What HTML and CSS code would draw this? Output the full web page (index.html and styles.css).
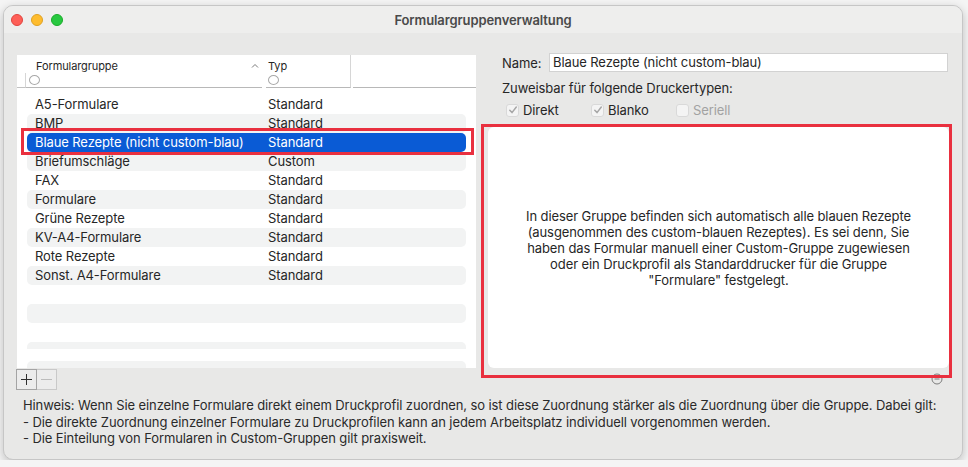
FILE: index.html
```html
<!DOCTYPE html>
<html lang="de">
<head>
	<meta charset="UTF-8">
	<title>Formulargruppenverwaltung</title>
	<link rel="stylesheet" href="styles.css">
</head>
<body>
	<div class="window">
		<div class="titlebar">
			<div class="lights">
				<span class="light red"></span>
				<span class="light yellow"></span>
				<span class="light green"></span>
			</div>
			<div class="title">Formulargruppenverwaltung</div>
			<div class="lights-spacer"></div>
		</div>

		<div class="main">
			<div class="left">
				<div class="table">
					<div class="head">
						<div class="hstub"></div>
						<div class="hcol hcol-name">
							<div class="hlabel">Formulargruppe
								<svg class="caret" width="8" height="5" viewBox="0 0 8 5"><path d="M1 4.5 L4 1.5 L7 4.5" fill="none" stroke="#7a7a7a" stroke-width="1"/></svg>
							</div>
							<span class="hradio"></span>
						</div>
						<div class="hcol hcol-type">
							<div class="hlabel">Typ</div>
							<span class="hradio"></span>
						</div>
						<div class="hcol hcol-rest"></div>
					</div>
					<div class="rows">
						<div class="row"><span class="c1">A5-Formulare</span><span class="c2">Standard</span></div>
						<div class="row alt"><span class="c1">BMP</span><span class="c2">Standard</span></div>
						<div class="row selected"><span class="c1">Blaue Rezepte (nicht custom-blau)</span><span class="c2">Standard</span></div>
						<div class="row alt"><span class="c1">Briefumschläge</span><span class="c2">Custom</span></div>
						<div class="row"><span class="c1">FAX</span><span class="c2">Standard</span></div>
						<div class="row alt"><span class="c1">Formulare</span><span class="c2">Standard</span></div>
						<div class="row"><span class="c1">Grüne Rezepte</span><span class="c2">Standard</span></div>
						<div class="row alt"><span class="c1">KV-A4-Formulare</span><span class="c2">Standard</span></div>
						<div class="row"><span class="c1">Rote Rezepte</span><span class="c2">Standard</span></div>
						<div class="row alt"><span class="c1">Sonst. A4-Formulare</span><span class="c2">Standard</span></div>
						<div class="row"></div>
						<div class="row alt"></div>
						<div class="row"></div>
						<div class="row alt cut"></div>
						<div class="gap"></div>
						<div class="row alt"></div>
					</div>
				</div>
				<div class="btns">
					<span class="btn"><svg width="11" height="11" viewBox="0 0 11 11"><path d="M5.5 0 V11 M0 5.5 H11" stroke="#2e2e2e" stroke-width="1"/></svg></span>
					<span class="btn disabled"><svg width="11" height="11" viewBox="0 0 11 11"><path d="M0 5.5 H11" stroke="#bcbcbc" stroke-width="1"/></svg></span>
				</div>
			</div>

			<div class="right">
				<div class="namerow">
					<label class="namelabel">Name:</label>
					<div class="nameinput">Blaue Rezepte (nicht custom-blau)</div>
				</div>
				<div class="caption">Zuweisbar für folgende Druckertypen:</div>
				<div class="checks">
					<div class="check"><span class="box"><svg width="10" height="10" viewBox="0 0 10 10"><path d="M1.8 5.2 L4 7.6 L8.3 2" fill="none" stroke="#a6a6a6" stroke-width="1.5" stroke-linecap="round" stroke-linejoin="round"/></svg></span>Direkt</div>
					<div class="check"><span class="box"><svg width="10" height="10" viewBox="0 0 10 10"><path d="M1.8 5.2 L4 7.6 L8.3 2" fill="none" stroke="#a6a6a6" stroke-width="1.5" stroke-linecap="round" stroke-linejoin="round"/></svg></span>Blanko</div>
					<div class="check off"><span class="box"></span>Seriell</div>
				</div>
				<div class="infobox">
					<p>In dieser Gruppe befinden sich automatisch alle blauen Rezepte<br>
					(ausgenommen des custom-blauen Rezeptes). Es sei denn, Sie<br>
					haben das Formular manuell einer Custom-Gruppe zugewiesen<br>
					oder ein Druckprofil als Standarddrucker für die Gruppe<br>
					"Formulare" festgelegt.</p>
				</div>
				<div class="grip">
					<svg width="12" height="12" viewBox="0 0 12 12"><circle cx="6" cy="6" r="5" fill="none" stroke="#7c7c7c" stroke-width="1"/><path d="M3.5 6 H8.5" stroke="#7c7c7c" stroke-width="1"/></svg>
				</div>
			</div>
		</div>

		<div class="hint">
			Hinweis: Wenn Sie einzelne Formulare direkt einem Druckprofil zuordnen, so ist diese Zuordnung stärker als die Zuordnung über die Gruppe. Dabei gilt:<br>
			- Die direkte Zuordnung einzelner Formulare zu Druckprofilen kann an jedem Arbeitsplatz individuell vorgenommen werden.<br>
			- Die Einteilung von Formularen in Custom-Gruppen gilt praxisweit.
		</div>

		<div class="mark mark-row"></div>
		<div class="mark mark-box"></div>
	</div>
</body>
</html>
```

FILE: styles.css
```css
* {
	box-sizing: border-box;
}
body {
	margin: 0;
	background: #f4f4f4;
	font-family: Inter, "Liberation Sans", Arial, sans-serif;
	font-size: 13px;
	letter-spacing: -0.1px;
	color: #262626;
}
.window {
	position: relative;
	margin: 5px 0 0 3px;
	width: 960px;
	height: 455px;
	border: 1px solid #c6c6c6;
	border-radius: 10px;
	background: #e8e8e7;
	overflow: hidden;
	box-shadow: 0 3px 10px rgba(0, 0, 0, 0.22);
}

/* title bar */
.titlebar {
	height: 27px;
	display: flex;
	align-items: center;
	background: #eeeeed;
}
.lights, .lights-spacer {
	width: 100px;
	display: flex;
	gap: 8px;
	padding-left: 7px;
}
.light {
	width: 12px;
	height: 12px;
	border-radius: 50%;
}
.red { background: #fe5f57; border: 0.5px solid #e0443e; }
.yellow { background: #febc2e; border: 0.5px solid #dea123; }
.green { background: #28c840; border: 0.5px solid #1aab29; }
.title {
	flex: 1;
	text-align: center;
	font-weight: 600;
	color: #4a4a4a;
}

/* main area */
.main {
	display: flex;
	align-items: flex-start;
	height: 357px;
	padding: 22px 0 0 13px;
}
.left {
	width: 459px;
}
.table {
	height: 313px;
	background: #fff;
	overflow: hidden;
}
.head {
	display: flex;
	align-items: flex-end;
	height: 33px;
}
.hstub {
	width: 9px;
	height: 15px;
	border-bottom: 1px solid #c2c2c2;
	border-right: 1px solid #d6d6d6;
}
.hcol {
	height: 33px;
	border-bottom: 1px solid #b8b8b8;
	padding-top: 4px;
}
.hcol-name {
	width: 236px;
	margin-right: 4px;
	padding-left: 3px;
}
.hcol-name .hlabel {
	padding-left: 7px;
}
.hcol-type {
	width: 85px;
	margin-right: 2px;
	padding-left: 2px;
	border-right: 1px solid #d6d6d6;
}
.hcol-rest {
	flex: 1;
	height: 23px;
}
.hlabel {
	display: flex;
	justify-content: space-between;
	align-items: center;
	font-size: 11px;
	line-height: 14px;
	color: #262626;
	padding-right: 3px;
}
.caret {
	margin-top: -2px;
}
.hradio {
	display: block;
	width: 11px;
	height: 10px;
	margin-top: 2px;
	border: 1px solid #a9a9a9;
	border-radius: 50%;
}
.rows {
	padding: 7px 10px 0 10px;
}
.row {
	display: flex;
	height: 19px;
	line-height: 19px;
	border-radius: 5px;
}
.row.alt {
	background: #f2f3f3;
}
.row.selected {
	background: #0a5bd5;
	color: #fff;
}
.row.cut {
	height: 7px;
	border-radius: 5px 5px 0 0;
}
.gap {
	height: 12px;
}
.c1 {
	width: 241px;
	padding-left: 8px;
}
.btns {
	display: flex;
	margin: 1px 0 0 -1px;
}
.btn {
	display: flex;
	align-items: center;
	justify-content: center;
	width: 21px;
	height: 21px;
	border: 1px solid #a4a4a4;
	background: #ececec;
}
.btn.disabled {
	border-color: #c9c9c9;
	border-left: 0;
	width: 20px;
}

/* right side */
.right {
	width: 461px;
	margin: -2px 0 0 12px;
}
.namerow {
	display: flex;
	align-items: center;
	height: 19px;
}
.namelabel {
	width: 61px;
	padding-left: 14px;
}
.nameinput {
	width: 399px;
	height: 19px;
	line-height: 17px;
	padding-left: 3px;
	background: #fff;
	border: 1px solid #d2d2d2;
}
.caption {
	margin-top: 8px;
	line-height: 16px;
	padding-left: 14px;
}
.checks {
	display: flex;
	margin-top: 6px;
	height: 16px;
	padding-left: 18px;
}
.check {
	display: flex;
	align-items: center;
	width: 85px;
}
.box {
	display: flex;
	align-items: center;
	justify-content: center;
	width: 13px;
	height: 13px;
	margin-right: 4px;
	border: 1px solid #d9d9d9;
	border-radius: 3px;
	background: #f4f4f4;
}
.check.off {
	color: #a2a2a2;
}
.infobox {
	display: flex;
	align-items: center;
	justify-content: center;
	margin-top: 9px;
	height: 241px;
	background: #fff;
	border-radius: 6px;
	text-align: center;
	line-height: 16px;
}
.infobox p {
	margin: 0;
}
.grip {
	display: flex;
	justify-content: flex-end;
	margin-top: 5px;
	padding-right: 6px;
	height: 12px;
}

/* hint */
.hint {
	padding: 7px 0 0 19px;
	line-height: 16.5px;
	color: #2a2a2a;
}

/* red annotation frames */
.mark {
	position: absolute;
	border: 3px solid #e9303f;
}
.mark-row {
	left: 17px;
	top: 122px;
	width: 453px;
	height: 27px;
}
.mark-box {
	left: 477px;
	top: 118px;
	width: 471px;
	height: 254px;
}
```
